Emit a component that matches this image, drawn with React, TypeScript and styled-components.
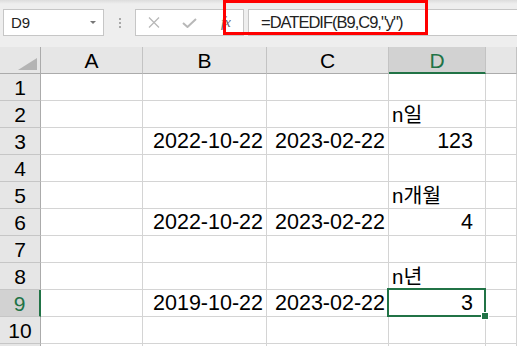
import React from 'react';
import styled, { createGlobalStyle } from 'styled-components';

const GREEN = '#217346';
const GRID = '#d4d4d4';

const GlobalStyle = createGlobalStyle`
  html, body { margin: 0; padding: 0; background: #fff; }
  body { width: 517px; height: 346px; overflow: hidden; font-family: "Liberation Sans", Arial, sans-serif; }
`;

const Sheet = styled.div`
  width: 517px;
  height: 346px;
  display: flex;
  flex-direction: column;
  overflow: hidden;
`;

const Toolbar = styled.div`
  position: relative;
  height: 47px;
  flex: none;
  box-sizing: border-box;
  padding: 9px 0 0 3px;
  display: flex;
  align-items: flex-start;
  background: linear-gradient(#dcdcdc 0, #eeeeee 4px, #eeeeee 100%);
`;

const NameBox = styled.div`
  width: 101px;
  height: 27px;
  box-sizing: border-box;
  border: 1px solid #c6c6c6;
  background: #fff;
  display: flex;
  align-items: center;
  justify-content: space-between;
  padding: 0 7px 0 7px;
  font-size: 15px;
  color: #222;
`;

const DropArrow = styled.span`
  width: 0;
  height: 0;
  border-left: 3px solid transparent;
  border-right: 3px solid transparent;
  border-top: 3px solid #777;
`;

const Dots = styled.div`
  width: 31px;
  height: 27px;
  display: flex;
  flex-direction: column;
  align-items: center;
  justify-content: center;
  gap: 2px;
  span {
    width: 2px;
    height: 2px;
    background: #a8a8a8;
  }
`;

const FxBox = styled.div`
  width: 109px;
  height: 27px;
  box-sizing: border-box;
  border: 1px solid #c6c6c6;
  background: #fff;
  display: flex;
  align-items: center;
  padding-left: 12px;
  gap: 22px;
`;

const FxLabel = styled.i`
  font-family: "Liberation Serif", serif;
  font-size: 15px;
  color: #666;
  letter-spacing: -1px;
  margin-left: 2px;
`;

const FormulaInput = styled.div`
  flex: 1;
  margin-left: 4px;
  height: 27px;
  box-sizing: border-box;
  border: 1px solid #c6c6c6;
  border-right: none;
  background: #fff;
  padding-left: 12px;
  display: flex;
  align-items: center;
  font-size: 16.5px;
  letter-spacing: -1px;
  color: #222;
`;

const Highlight = styled.div`
  position: absolute;
  left: 223px;
  top: 0;
  width: 205px;
  height: 35px;
  box-sizing: border-box;
  border: 3px solid #ff0000;
`;

const Grid = styled.div`
  display: grid;
  grid-template-columns: 41px 102px 124px 122px 97px 1fr;
  grid-auto-rows: 27px;
  background: #fff;
`;

const ColHead = styled.div<{ $sel?: boolean }>`
  box-sizing: border-box;
  background: ${p => (p.$sel ? '#d2d2d2' : '#e6e6e6')};
  border-right: 1px solid #c3c3c3;
  border-bottom: ${p => (p.$sel ? `2px solid ${GREEN}` : '1px solid #ababab')};
  color: ${p => (p.$sel ? GREEN : '#000')};
  display: flex;
  align-items: flex-end;
  justify-content: center;
  font-size: 21px;
  line-height: 1;
  padding-bottom: ${p => (p.$sel ? '1px' : '2px')};
`;

const Corner = styled(ColHead)`
  border-right: 1px solid #ababab;
  justify-content: flex-end;
  padding: 0 3px 3px 0;
`;

const RowHead = styled.div<{ $sel?: boolean }>`
  box-sizing: border-box;
  background: ${p => (p.$sel ? '#d2d2d2' : '#e6e6e6')};
  border-right: ${p => (p.$sel ? `2px solid ${GREEN}` : '1px solid #ababab')};
  border-bottom: 1px solid #c6c6c6;
  color: ${p => (p.$sel ? GREEN : '#000')};
  display: flex;
  align-items: flex-end;
  justify-content: center;
  font-size: 21px;
  line-height: 1;
  padding-bottom: 2px;
`;

const Cell = styled.div<{ $align?: 'left' | 'right'; $pad?: number; $sel?: boolean }>`
  position: relative;
  box-sizing: border-box;
  border-right: 1px solid ${GRID};
  border-bottom: 1px solid ${GRID};
  display: flex;
  align-items: flex-end;
  justify-content: ${p => (p.$align === 'left' ? 'flex-start' : 'flex-end')};
  padding: 0 ${p => (p.$align === 'left' ? 0 : p.$pad ?? 3)}px 2px ${p => (p.$align === 'left' ? 3 : 0)}px;
  font-family: "Liberation Sans", "Noto Sans CJK KR", sans-serif;
  font-size: 21.5px;
  line-height: 1;
  color: #000;
  white-space: nowrap;
  ${p =>
    p.$sel &&
    `
    &::after {
      content: '';
      position: absolute;
      left: -2px; top: -2px; right: -1px; bottom: -1px;
      border: 2px solid ${GREEN};
    }
  `}
`;

const Label = styled.span`
  font-size: 20.5px;
`;

const FillHandle = styled.span`
  position: absolute;
  right: -4px;
  bottom: -4px;
  width: 6px;
  height: 6px;
  background: ${GREEN};
  border: 1px solid #fff;
  z-index: 2;
`;

type Row = { b?: string; c?: string; d?: string; label?: string };

const rows: Row[] = [
  {},
  { label: 'n일' },
  { b: '2022-10-22', c: '2023-02-22', d: '123' },
  {},
  { label: 'n개월' },
  { b: '2022-10-22', c: '2023-02-22', d: '4' },
  {},
  { label: 'n년' },
  { b: '2019-10-22', c: '2023-02-22', d: '3' },
  {},
];

const SEL_ROW = 9;

export default function App() {
  return (
    <Sheet>
      <GlobalStyle />
      <Toolbar>
        <NameBox>
          D9
          <DropArrow />
        </NameBox>
        <Dots>
          <span />
          <span />
          <span />
        </Dots>
        <FxBox>
          <svg width="12" height="11" viewBox="0 0 12 11">
            <path d="M1 0.5 L11 10.5 M11 0.5 L1 10.5" stroke="#b8b8b8" strokeWidth="1.3" fill="none" />
          </svg>
          <svg width="15" height="10" viewBox="0 0 15 10">
            <path d="M1 5 L5.5 9 L14 1" stroke="#b8b8b8" strokeWidth="2" fill="none" />
          </svg>
          <FxLabel>fx</FxLabel>
        </FxBox>
        <FormulaInput>=DATEDIF(B9,C9,"y")</FormulaInput>
        <Highlight />
      </Toolbar>
      <Grid>
        <Corner>
          <svg width="19" height="12" viewBox="0 0 19 12">
            <polygon points="19,0 19,12 0,12" fill="#b4b4b4" />
          </svg>
        </Corner>
        {['A', 'B', 'C', 'D', 'E'].map(c => (
          <ColHead key={c} $sel={c === 'D'}>
            {c === 'E' ? '' : c}
          </ColHead>
        ))}
        {rows.map((r, i) => {
          const n = i + 1;
          const sel = n === SEL_ROW;
          return (
            <React.Fragment key={n}>
              <RowHead $sel={sel}>{n}</RowHead>
              <Cell />
              <Cell>{r.b}</Cell>
              <Cell>{r.c}</Cell>
              {r.label ? (
                <Cell $align="left">
                  <Label>{r.label}</Label>
                </Cell>
              ) : (
                <Cell $pad={12} $sel={sel}>
                  {r.d}
                  {sel && <FillHandle />}
                </Cell>
              )}
              <Cell />
            </React.Fragment>
          );
        })}
        <RowHead />
        <Cell />
        <Cell />
        <Cell />
        <Cell />
        <Cell />
      </Grid>
    </Sheet>
  );
}
